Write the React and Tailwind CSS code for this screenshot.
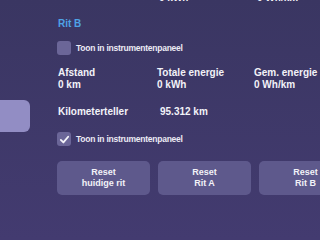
import React from 'react';

const font = { fontFamily: '"Liberation Sans", Arial, sans-serif' };

const Check = ({ checked }) => (
    <div className="w-[14px] h-[14px] rounded-[3px] bg-[#6b6698] flex items-center justify-center shrink-0">
        {checked && (
            <svg width="11" height="11" viewBox="0 0 12 12" fill="none">
                <path d="M2 6.5 L4.8 9.2 L10 3" stroke="#f4f4fa" strokeWidth="2" strokeLinecap="round" strokeLinejoin="round" />
            </svg>
        )}
    </div>
);

const Toggle = ({ checked }) => (
    <div className="flex items-center gap-[5px] h-[14px]">
        <Check checked={checked} />
        <span className="text-[8.5px] tracking-[-0.25px] font-bold text-[#ecebf4] leading-[12px]">Toon in instrumentenpaneel</span>
    </div>
);

const Stat = ({ label, value, w }) => (
    <div className={w}>
        <div className="text-[10px] font-bold text-[#f2f2f8] leading-[12px]">{label}</div>
        <div className="text-[10px] font-bold text-[#f2f2f8] leading-[12px]">{value}</div>
    </div>
);

const App = () => {
    return (
        <div style={font} className="w-[320px] h-[240px] overflow-hidden flex bg-gradient-to-b from-[#3a3662] to-[#433b70]">
            {/* sidebar */}
            <div className="w-[57px] shrink-0">
                <div className="mt-[100px] w-[30px] h-[32px] rounded-r-[6px] bg-[#928dc4]" />
            </div>

            <div className="flex-1 flex flex-col pl-[1px]">
                {/* tail of previous section */}
                <div className="flex -mt-[8px] text-[10px] font-bold text-[#f2f2f8] leading-[12px]">
                    <div className="w-[100px]" />
                    <div className="w-[98px] pl-[1px]">0 kWh</div>
                    <div className="pl-[1px]">0 Wh/km</div>
                </div>

                <div className="mt-[14px] text-[10px] font-bold text-[#4fa3e6] leading-[12px]">Rit B</div>

                <div className="mt-[11px] -ml-[1px]">
                    <Toggle checked={false} />
                </div>

                <div className="mt-[12px] flex">
                    <Stat label="Afstand" value="0 km" w="w-[99px]" />
                    <Stat label="Totale energie" value="0 kWh" w="w-[97px]" />
                    <Stat label="Gem. energie" value="0 Wh/km" w="" />
                </div>

                <div className="mt-[15px] flex text-[10px] font-bold text-[#f2f2f8] leading-[12px]">
                    <div className="w-[102px]">Kilometerteller</div>
                    <div>95.312 km</div>
                </div>

                <div className="mt-[14px] -ml-[1px]">
                    <Toggle checked={true} />
                </div>

                <div className="mt-[15px] -ml-[1px] flex gap-[8px]">
                    {[['Reset', 'huidige rit'], ['Reset', 'Rit A'], ['Reset', 'Rit B']].map((b, i) => (
                        <div key={i} className="w-[93px] h-[34px] shrink-0 rounded-[5px] bg-[#5e598c] flex flex-col items-center justify-center text-[9px] font-bold text-[#f2f2f8] leading-[11px]">
                            <span>{b[0]}</span>
                            <span>{b[1]}</span>
                        </div>
                    ))}
                </div>
            </div>
        </div>
    );
};

export default App;
